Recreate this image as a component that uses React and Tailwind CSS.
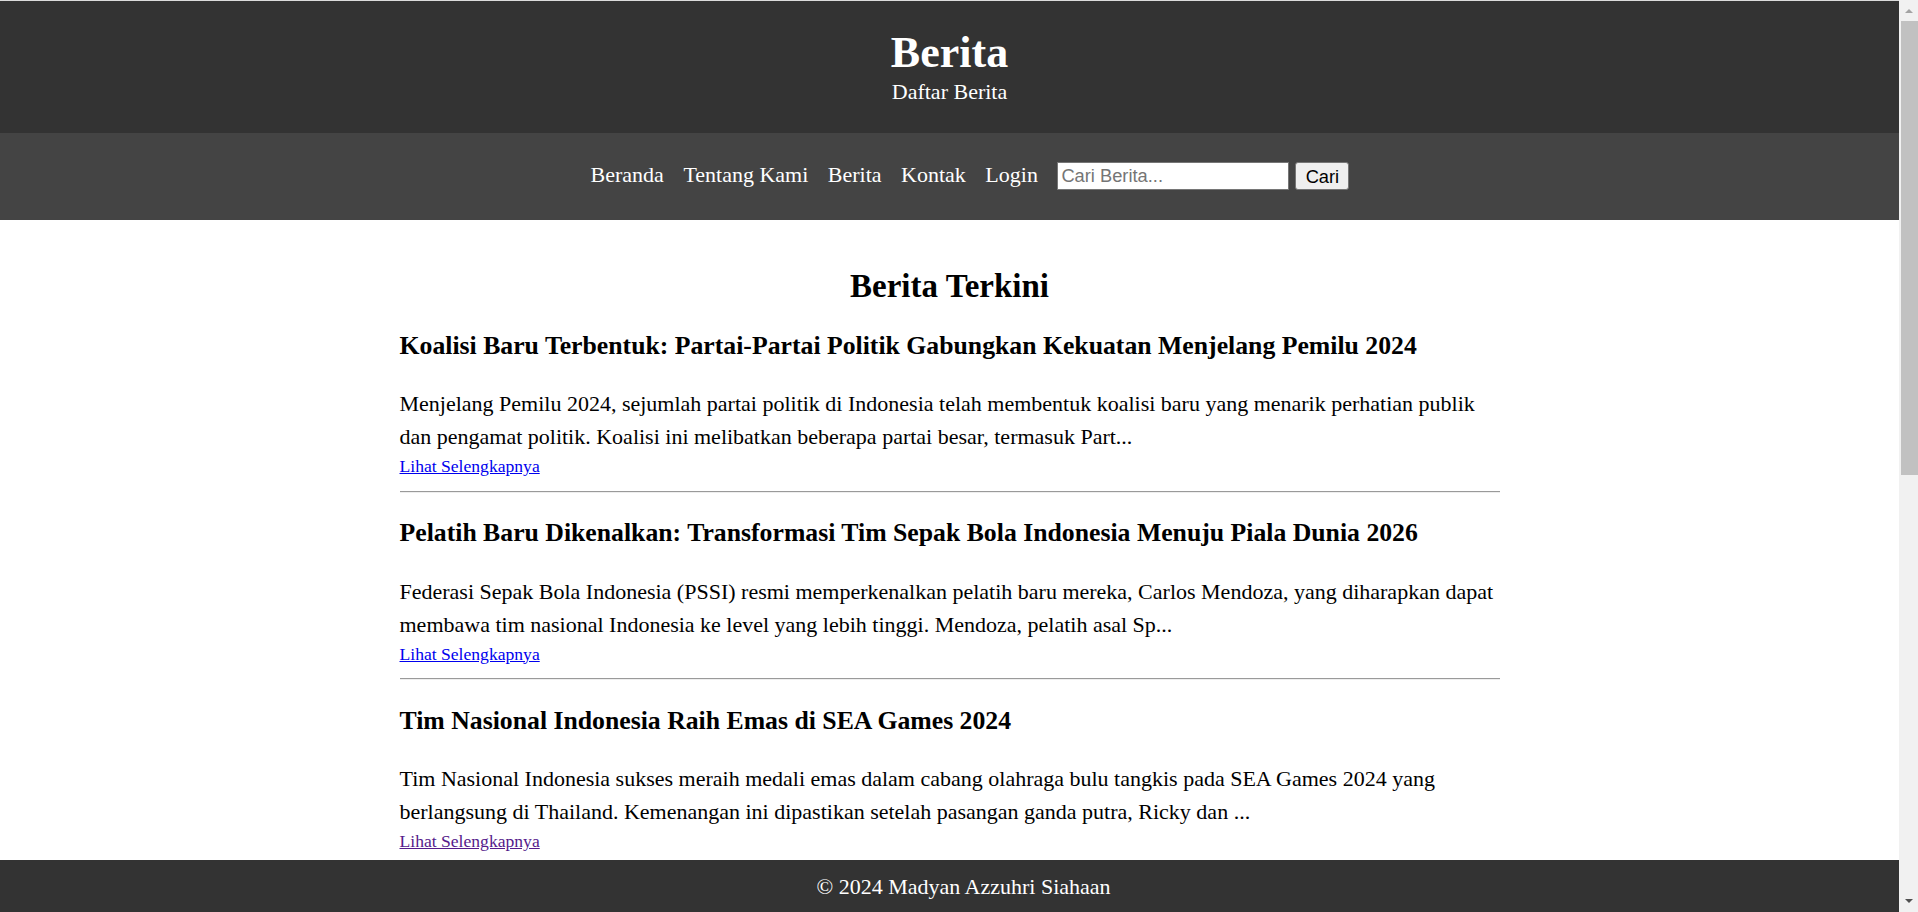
const menu = ["Beranda", "Tentang Kami", "Berita", "Kontak", "Login"];

const beritaList = [
  {
    judul: "Koalisi Baru Terbentuk: Partai-Partai Politik Gabungkan Kekuatan Menjelang Pemilu 2024",
    isi: "Menjelang Pemilu 2024, sejumlah partai politik di Indonesia telah membentuk koalisi baru yang menarik perhatian publik dan pengamat politik. Koalisi ini melibatkan beberapa partai besar, termasuk Part...",
  },
  {
    judul: "Pelatih Baru Dikenalkan: Transformasi Tim Sepak Bola Indonesia Menuju Piala Dunia 2026",
    isi: "Federasi Sepak Bola Indonesia (PSSI) resmi memperkenalkan pelatih baru mereka, Carlos Mendoza, yang diharapkan dapat membawa tim nasional Indonesia ke level yang lebih tinggi. Mendoza, pelatih asal Sp...",
  },
  {
    judul: "Tim Nasional Indonesia Raih Emas di SEA Games 2024",
    isi: "Tim Nasional Indonesia sukses meraih medali emas dalam cabang olahraga bulu tangkis pada SEA Games 2024 yang berlangsung di Thailand. Kemenangan ini dipastikan setelah pasangan ganda putra, Ricky dan ...",
    visited: true,
  },
  {
    judul: "Pemerintah Luncurkan Program Digitalisasi UMKM di Seluruh Provinsi",
    isi: "Kementerian Koperasi dan UKM meluncurkan program digitalisasi untuk membantu pelaku usaha mikro, kecil, dan menengah memasarkan produk mereka secara daring. Program ini menargetkan jutaan pelaku usaha...",
  },
  {
    judul: "Harga Bahan Pokok Stabil Menjelang Bulan Ramadan",
    isi: "Badan Pusat Statistik melaporkan bahwa harga bahan pokok di sejumlah pasar tradisional relatif stabil menjelang bulan Ramadan. Pemerintah daerah juga menggelar operasi pasar untuk menjaga ketersediaan...",
  },
  {
    judul: "Gunung Merapi Kembali Erupsi, Warga Diminta Waspada",
    isi: "Balai Penyelidikan dan Pengembangan Teknologi Kebencanaan Geologi mencatat aktivitas erupsi Gunung Merapi pada pagi hari. Warga yang tinggal di sekitar lereng gunung diminta untuk tetap waspada dan ...",
  },
  {
    judul: "Startup Lokal Raih Pendanaan Seri B untuk Ekspansi ke Asia Tenggara",
    isi: "Sebuah perusahaan rintisan teknologi asal Jakarta berhasil mengumpulkan pendanaan Seri B dari sejumlah investor regional. Dana tersebut akan digunakan untuk memperluas layanan ke beberapa negara di A...",
  },
  {
    judul: "Festival Budaya Nusantara Digelar di Yogyakarta",
    isi: "Ribuan pengunjung memadati kawasan Malioboro untuk menyaksikan Festival Budaya Nusantara yang menampilkan tarian, musik tradisional, dan kuliner dari berbagai daerah di Indonesia. Acara ini berlangsu...",
  },
];

// scrollbar jendela browser seperti pada tangkapan layar
const Scrollbar = () => (
  <div className="fixed top-0 right-0 h-screen w-[19px] bg-[#f1f1f1] flex flex-col items-end">
    <div className="h-[21px] w-full flex items-center justify-center">
      <svg width="8" height="5" viewBox="0 0 8 5">
        <path d="M0 5 L4 1 L8 5 Z" fill="#a3a3a3" />
      </svg>
    </div>
    <div className="w-[17px] h-[454px] bg-[#c1c1c1]" />
    <div className="flex-1" />
    <div className="h-[21px] w-full flex items-center justify-center">
      <svg width="8" height="5" viewBox="0 0 8 5">
        <path d="M0 0 L4 4 L8 0 Z" fill="#505050" />
      </svg>
    </div>
  </div>
);

export default function App() {
  return (
    <div className="min-h-screen bg-white border-t border-[#dcdcdc] font-['Liberation_Serif','Times_New_Roman',serif] text-black">
      <div className="mr-[19px]">
        <header className="bg-[#333333] text-white text-center pt-[27px] pb-[29px]">
          <h1 className="text-[44px] leading-[50.6px] font-bold">Berita</h1>
          <p className="text-[22px] leading-[25.3px]">Daftar Berita</p>
        </header>

        <nav className="bg-[#444444] h-[87px] flex items-center justify-center pl-[41px]">
          <div className="flex items-center gap-[19.5px] mb-[4px] text-[22px] text-white leading-[25px]">
            {menu.map((item) => (
              <a key={item} href="#">
                {item}
              </a>
            ))}
          </div>
          <form className="flex items-center ml-[19.5px]" onSubmit={(e) => e.preventDefault()}>
            <input
              type="text"
              placeholder="Cari Berita..."
              className="w-[232px] h-[28px] bg-white border border-[#767676] px-[3px] text-[18.3px] font-['Liberation_Sans',Arial,sans-serif] text-black placeholder:text-[#757575] outline-none"
            />
            <button
              type="submit"
              className="ml-[6px] w-[54px] h-[28px] bg-[#efefef] border border-[#767676] rounded-[3px] text-[18.3px] font-['Liberation_Sans',Arial,sans-serif] text-black"
            >
              Cari
            </button>
          </form>
        </nav>

        <main className="max-w-[1100px] mx-auto pt-[47.5px] pb-[80px]">
          <h2 className="text-[33px] leading-[38px] font-bold text-center mb-[25.5px]">Berita Terkini</h2>
          {beritaList.map((b, i) => (
            <article key={i}>
              <h3 className="text-[25.74px] leading-[30.5px] font-bold mb-[25.74px]">{b.judul}</h3>
              <p className="text-[22px] leading-[33px]">{b.isi}</p>
              <div className="text-[17.6px] leading-[26px]">
                <a
                  href="#"
                  className={b.visited ? "underline text-[#551a8b]" : "underline text-[#0000ee]"}
                >
                  Lihat Selengkapnya
                </a>
              </div>
              <hr className="mt-[11.5px] mb-[25.74px] border-t border-t-[#9a9a9a] border-b border-b-[#eeeeee]" />
            </article>
          ))}
        </main>
      </div>

      <footer className="fixed bottom-0 left-0 right-[19px] h-[52px] pl-[28px] bg-[#333333] text-white text-[22px] flex items-center justify-center">
        © 2024 Madyan Azzuhri Siahaan
      </footer>

      <Scrollbar />
    </div>
  );
}
